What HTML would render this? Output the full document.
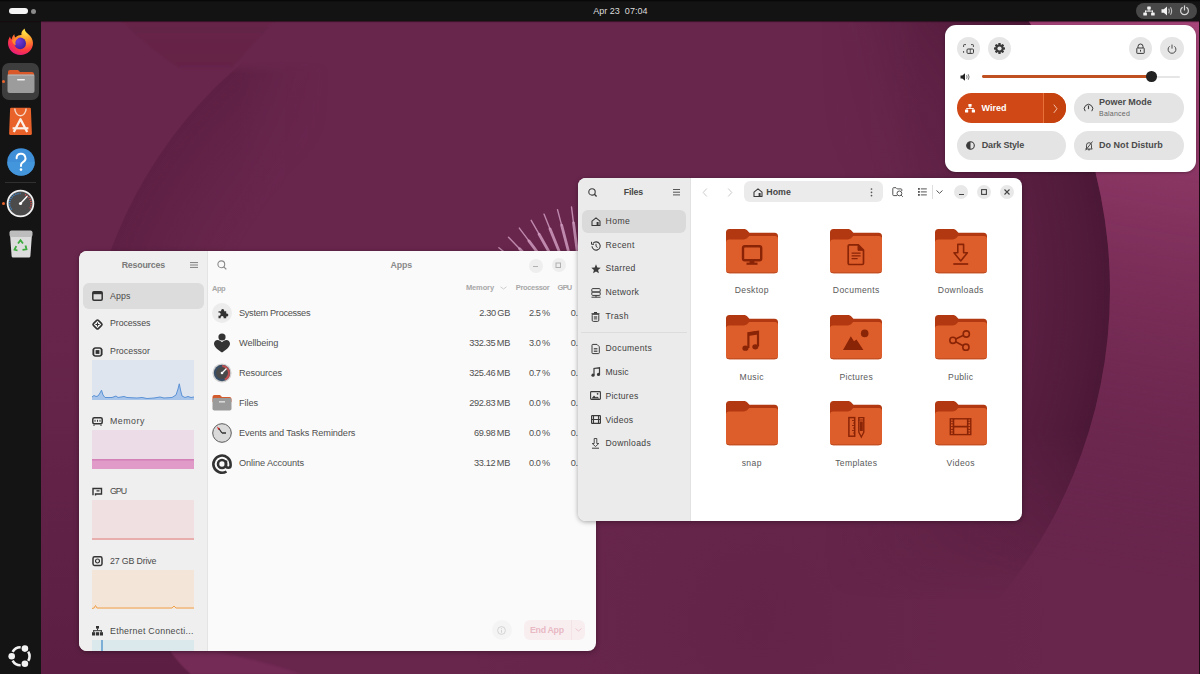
<!DOCTYPE html>
<html><head><meta charset="utf-8">
<style>
*{box-sizing:border-box;margin:0;padding:0}
html,body{width:1200px;height:674px;overflow:hidden;background:#69264d;font-family:"Liberation Sans",sans-serif;}
.abs,.a,.t{position:absolute}
.t{white-space:pre}
svg.a{overflow:visible}
#wall{position:absolute;left:0;top:0;width:1200px;height:674px}
#topbar{position:absolute;left:0;top:0;width:1200px;height:20.5px;background:linear-gradient(#050505 0,#0a0a0a 1px,#131313 2px);box-shadow:0 1px 1px rgba(20,5,12,.55);z-index:1}
#dock{position:absolute;left:0;top:20px;width:41px;height:654px;background:#141414}
.win{position:absolute;overflow:hidden;border-radius:8px;box-shadow:0 1px 5px rgba(0,0,0,.35)}
</style></head><body>
<svg id="wall" width="1200" height="674" viewBox="0 0 1200 674">
<defs>
<radialGradient id="gL" gradientUnits="userSpaceOnUse" cx="533" cy="406" r="450">
<stop offset="0.74" stop-color="#3a0c28" stop-opacity="0"/>
<stop offset="1" stop-color="#3a0c28" stop-opacity="0.22"/>
</radialGradient>
<radialGradient id="gR" gradientUnits="userSpaceOnUse" cx="625" cy="290" r="485">
<stop offset="0.5" stop-color="#2e0a20" stop-opacity="0"/>
<stop offset="0.8" stop-color="#2e0a20" stop-opacity="0.2"/>
<stop offset="0.96" stop-color="#2e0a20" stop-opacity="0.42"/>
<stop offset="1" stop-color="#2e0a20" stop-opacity="0.5"/>
</radialGradient>
<linearGradient id="gP" gradientUnits="userSpaceOnUse" x1="1150" y1="20" x2="1060" y2="560">
<stop offset="0" stop-color="#a8467a" stop-opacity="0.95"/>
<stop offset="0.45" stop-color="#84325e" stop-opacity="0.7"/>
<stop offset="1" stop-color="#69264d" stop-opacity="0"/>
</linearGradient>
<clipPath id="cL"><circle cx="533" cy="406" r="450"/></clipPath>
<clipPath id="cR"><circle cx="625" cy="290" r="485"/></clipPath>
<mask id="mOut"><rect width="1200" height="674" fill="#fff"/><circle cx="625" cy="290" r="485" fill="#000"/></mask>
<linearGradient id="mLg" gradientUnits="userSpaceOnUse" x1="240" y1="0" x2="330" y2="0"><stop offset="0" stop-color="#fff"/><stop offset="1" stop-color="#000"/></linearGradient>
<linearGradient id="mLv" gradientUnits="userSpaceOnUse" x1="0" y1="62" x2="0" y2="320"><stop offset="0" stop-color="#000"/><stop offset="0.045" stop-color="#fff"/><stop offset="0.8" stop-color="#fff"/><stop offset="1" stop-color="#000"/></linearGradient>
<linearGradient id="gBL" gradientUnits="userSpaceOnUse" x1="0" y1="260" x2="0" y2="674"><stop offset="0" stop-color="#3a0c28" stop-opacity="0"/><stop offset="1" stop-color="#3a0c28" stop-opacity="0.28"/></linearGradient>
<mask id="mL"><rect width="1200" height="674" fill="url(#mLv)"/></mask>
<mask id="mL2"><rect width="1200" height="674" fill="url(#mLg)"/></mask>
<filter id="blur2" x="-20%" y="-20%" width="140%" height="140%"><feGaussianBlur stdDeviation="1.2"/></filter>
<linearGradient id="gTop" gradientUnits="userSpaceOnUse" x1="0" y1="20" x2="0" y2="70"><stop offset="0" stop-color="#3a0c28" stop-opacity="0.05"/><stop offset="1" stop-color="#3a0c28" stop-opacity="0.10"/></linearGradient>
<linearGradient id="mRg1" gradientUnits="userSpaceOnUse" x1="0" y1="430" x2="0" y2="600"><stop offset="0" stop-color="#fff"/><stop offset="1" stop-color="#000"/></linearGradient>
<linearGradient id="mRg2" gradientUnits="userSpaceOnUse" x1="820" y1="0" x2="920" y2="0"><stop offset="0" stop-color="#000"/><stop offset="1" stop-color="#fff"/></linearGradient>
<mask id="mR1"><rect width="1200" height="674" fill="url(#mRg1)"/></mask>
<mask id="mR2"><rect width="1200" height="674" fill="url(#mRg2)"/></mask>
<radialGradient id="gBC" gradientUnits="userSpaceOnUse" cx="760" cy="620" r="330"><stop offset="0" stop-color="#2e0a20" stop-opacity="0.1"/><stop offset="1" stop-color="#2e0a20" stop-opacity="0"/></radialGradient>
</defs>
<rect width="1200" height="674" fill="#69264d"/>
<g mask="url(#mL2)"><circle cx="533" cy="406" r="450" fill="url(#gL)" mask="url(#mL)"/></g>
<path d="M120 20H276L231 68.5H180Q150 50 120 20z" fill="url(#gTop)" filter="url(#blur2)"/>
<g mask="url(#mR1)"><circle cx="625" cy="290" r="485" fill="url(#gR)" mask="url(#mR2)"/></g>
<rect x="430" y="290" width="660" height="384" fill="url(#gBC)"/>
<rect x="900" y="0" width="300" height="674" fill="url(#gP)" mask="url(#mOut)"/>
<path d="M41 250H150L160 600Q165 640 171 652Q180 665 191 674H41z" fill="url(#gBL)"/>
<path d="M171 652H216Q260 660 301 674H191Q180 665 171 652z" fill="#8a3566" opacity="0.35" filter="url(#blur2)"/>
<g stroke="#d5a2c6" stroke-opacity="0.8" stroke-linecap="round">
<line x1="585.7" y1="206.0" x2="585.7" y2="222.0" stroke-width="1.4"/><line x1="585.7" y1="222.0" x2="585.7" y2="262.0" stroke-width="2.8"/>
<line x1="571.5" y1="206.9" x2="573.5" y2="222.8" stroke-width="1.4"/><line x1="573.5" y1="222.8" x2="578.7" y2="262.5" stroke-width="2.8"/>
<line x1="557.5" y1="209.6" x2="561.6" y2="225.1" stroke-width="1.4"/><line x1="561.6" y1="225.1" x2="571.7" y2="263.8" stroke-width="2.8"/>
<line x1="544.0" y1="214.1" x2="550.0" y2="228.9" stroke-width="1.4"/><line x1="550.0" y1="228.9" x2="565.1" y2="266.0" stroke-width="2.8"/>
<line x1="531.2" y1="220.3" x2="539.1" y2="234.2" stroke-width="1.4"/><line x1="539.1" y1="234.2" x2="558.7" y2="269.1" stroke-width="2.8"/>
<line x1="519.3" y1="228.1" x2="528.9" y2="240.9" stroke-width="1.4"/><line x1="528.9" y1="240.9" x2="552.8" y2="272.9" stroke-width="2.8"/>
<line x1="508.5" y1="237.3" x2="519.6" y2="248.8" stroke-width="1.4"/><line x1="519.6" y1="248.8" x2="547.4" y2="277.5" stroke-width="2.8"/>
<line x1="498.9" y1="247.8" x2="511.4" y2="257.8" stroke-width="1.4"/><line x1="511.4" y1="257.8" x2="542.7" y2="282.7" stroke-width="2.8"/>
<line x1="490.8" y1="259.5" x2="504.4" y2="267.8" stroke-width="1.4"/><line x1="504.4" y1="267.8" x2="538.7" y2="288.5" stroke-width="2.8"/>
<line x1="484.2" y1="272.1" x2="498.8" y2="278.6" stroke-width="1.4"/><line x1="498.8" y1="278.6" x2="535.4" y2="294.8" stroke-width="2.8"/>
</g>
<rect x="1199" y="0" width="1" height="674" fill="#1a0a12"/>
</svg>
<div id="topbar">
<div class="abs" style="left:9px;top:8px;width:19px;height:6px;border-radius:3px;background:#f4f4f4"></div>
<div class="abs" style="left:31px;top:9px;width:5px;height:5px;border-radius:50%;background:#8a8a8a"></div>
<div class="abs" id="clock" style="left:593.2px;top:6.7px;color:#dcdcdc;font-size:9px;line-height:9px;white-space:pre;letter-spacing:0.02px">Apr 23  07:04</div>
<div class="abs" style="left:1136px;top:3px;width:61px;height:16px;border-radius:8px;background:#484848"></div>
<svg class="abs" style="left:1143px;top:6px" width="12" height="10" viewBox="0 0 12 10"><g fill="#f2f2f2"><rect x="4.2" y="0.5" width="3.6" height="3" rx="0.6"/><rect x="5.5" y="3" width="1" height="2.2"/><rect x="2" y="4.6" width="8" height="1"/><rect x="2" y="4.6" width="1" height="2"/><rect x="9" y="4.6" width="1" height="2"/><rect x="0.3" y="6.5" width="3.6" height="3" rx="0.6"/><rect x="8.1" y="6.5" width="3.6" height="3" rx="0.6"/></g></svg>
<svg class="abs" style="left:1161px;top:6px" width="12" height="10" viewBox="0 0 12 10"><path d="M0.5 3.3h2.3L6 0.5v9L2.8 6.7H0.5z" fill="#f2f2f2"/><path d="M7.6 2.6q1.4 2.4 0 4.8M9.5 1.2q2.3 3.8 0 7.6" stroke="#bdbdbd" stroke-width="1.1" fill="none"/></svg>
<svg class="abs" style="left:1179px;top:5px" width="11" height="11" viewBox="0 0 11 11"><path d="M3.3 2.6A3.9 3.9 0 1 0 7.7 2.6" stroke="#d8d8d8" stroke-width="1.2" fill="none" stroke-linecap="round"/><path d="M5.5 0.8v4.2" stroke="#d8d8d8" stroke-width="1.2" stroke-linecap="round"/></svg>
</div>
<div id="dock">
<!-- firefox -->
<svg class="abs" style="left:7px;top:8px" width="27" height="28" viewBox="0 0 27 28">
<defs><radialGradient id="ff1" cx="0.7" cy="0.1" r="1"><stop offset="0" stop-color="#ffe94a"/><stop offset="0.35" stop-color="#ff9d2b"/><stop offset="0.7" stop-color="#ff3d3d"/><stop offset="1" stop-color="#e31587"/></radialGradient>
<radialGradient id="ff2" cx="0.3" cy="0.3" r="0.8"><stop offset="0" stop-color="#7d3de0"/><stop offset="1" stop-color="#3a1f9e"/></radialGradient></defs>
<path d="M13.5 27C6.6 27 1 21.6 1 15.2c0-2.6 .8-4.9 2-6.6.2 1.3.8 2.3 1.6 2.9.3-2.3 1.4-4.2 2.8-5.3-.1 1.4.3 2.5 1 3.2C10.5 7.5 12.6 6.9 14.5 7 14 5 14.8 2.6 17.8.6c-.3 2.3 1.3 3.7 3.3 5.4C24.3 8.6 26 11.7 26 15.2 26 21.6 20.4 27 13.5 27z" fill="url(#ff1)"/>
<circle cx="13.2" cy="15.4" r="5.8" fill="url(#ff2)"/>
<path d="M5 12.8c1.5-2.4 4.5-3.8 7.6-3.4-2.6.9-4.2 3-4.2 5.5 0 .9.2 1.7.6 2.4C7 16.8 5.6 15 5 12.8z" fill="#ff8a2b"/>
</svg>
<!-- files highlight -->
<div class="abs" style="left:2px;top:43px;width:37px;height:37px;border-radius:7px;background:#3d3d3d"></div>
<div class="abs" style="left:2px;top:60px;width:3px;height:3px;border-radius:50%;background:#e8642c"></div>
<svg class="abs" style="left:7px;top:49px" width="28" height="25" viewBox="0 0 28 25">
<path d="M1 3a2 2 0 0 1 2-2h8l2 2h12a2 2 0 0 1 2 2v4H1z" fill="#d9582a"/>
<rect x="0.5" y="5.5" width="27" height="18.5" rx="2" fill="#9c9c9c"/>
<rect x="0.5" y="5.5" width="27" height="1.2" fill="#c7c7c7" opacity="0.6"/>
<rect x="10" y="10" width="8" height="1.6" rx="0.8" fill="#f0f0f0"/>
</svg>
<!-- app center -->
<svg class="abs" style="left:9px;top:87px" width="23" height="29" viewBox="0 0 23 29">
<path d="M2.2 1.8H20.8L21.8 26.8H1.2z" fill="#e9622a" stroke="#e9622a" stroke-width="2.2" stroke-linejoin="round"/>
<path d="M5.8 1.5A5.65 7.2 0 0 0 17.1 1.5" stroke="#f7d9c8" stroke-width="1.4" fill="none"/>
<path d="M4.8 25L11.5 12.2 18.2 25" stroke="#fbefe8" stroke-width="2.3" fill="none" stroke-linejoin="round"/>
<path d="M3.6 21.3H19.4" stroke="#fbefe8" stroke-width="2.2"/>
</svg>
<!-- help -->
<svg class="abs" style="left:7px;top:128px" width="28" height="28" viewBox="0 0 28 28">
<circle cx="14" cy="14" r="13.8" fill="#3e8ed8"/>
<path d="M0.2 14a13.8 13.8 0 0 0 27.6 0z" fill="#4a9be0" opacity="0.6"/>
<path d="M9.6 10.2a4.4 4.4 0 1 1 6.4 3.9c-1.2.7-2 1.5-2 2.9v1" stroke="#fff" stroke-width="2" fill="none" stroke-linecap="round"/>
<circle cx="14" cy="21.6" r="1.3" fill="#fff"/>
</svg>
<div class="abs" style="left:5px;top:162px;width:31px;height:1px;background:#303030"></div>
<!-- resources -->
<div class="abs" style="left:2px;top:182px;width:3px;height:3px;border-radius:50%;background:#e8642c"></div>
<svg class="abs" style="left:6px;top:169px" width="29" height="29" viewBox="0 0 29 29">
<circle cx="14.5" cy="14.5" r="13.8" fill="#f2f2f2"/>
<circle cx="14.5" cy="14.5" r="12" fill="#4b4b4b"/>
<path d="M5.6 20.5A10 10 0 0 1 14.5 4.5" stroke="#3d8ed8" stroke-width="1.6" stroke-dasharray="1 1.2" fill="none"/>
<path d="M19 5.6A10 10 0 0 1 23.4 20.5" stroke="#e05050" stroke-width="1.6" stroke-dasharray="1 1.2" fill="none"/>
<path d="M14.5 14.5L21 7.5" stroke="#fff" stroke-width="1.4" stroke-linecap="round"/>
<circle cx="14.5" cy="14.5" r="1.6" fill="#fff"/>
</svg>
<!-- trash -->
<svg class="abs" style="left:9px;top:210px" width="24" height="28" viewBox="0 0 24 28">
<path d="M1 4h22l-1.6 22a1.6 1.6 0 0 1-1.6 1.6H4.2A1.6 1.6 0 0 1 2.6 26z" fill="#dcdcdc"/>
<rect x="0.5" y="0.5" width="23" height="6.5" rx="2" fill="#bdbdbd"/>
<g fill="none" stroke="#3caa3c" stroke-width="1.8"><path d="M9 13.5l2.5-3.2 2.5 3.2"/><path d="M16.5 15.5l1 3.8-4 .5"/><path d="M8.5 20.5l-3-.8 1.8-3.6"/></g>
</svg>
<!-- ubuntu logo -->
<svg class="abs" style="left:8px;top:623.5px" width="25" height="25" viewBox="0 0 25 25"><path d="M4.63 7.84A9.0 9.0 0 0 1 12.66 3.20" stroke="#f2f2f2" stroke-width="2.6" fill="none"/><path d="M20.21 7.56A9.0 9.0 0 0 1 20.21 16.84" stroke="#f2f2f2" stroke-width="2.6" fill="none"/><path d="M12.66 21.20A9.0 9.0 0 0 1 4.63 16.56" stroke="#f2f2f2" stroke-width="2.6" fill="none"/><circle cx="3.70" cy="12.20" r="3.3" fill="#f2f2f2"/><circle cx="16.90" cy="4.58" r="3.3" fill="#f2f2f2"/><circle cx="16.90" cy="19.82" r="3.3" fill="#f2f2f2"/></svg>
</div>
<div id="res" class="win" style="left:79px;top:251px;width:517px;height:400px;background:#fafafa"><div class="a" style="left:0px;top:0px;width:128px;height:400px;background:#efefef;border-radius:0px;"></div>
<div class="a" style="left:128px;top:0px;width:1px;height:400px;background:#e4e4e4;border-radius:0px;"></div>
<div class="a" style="left:4px;top:32px;width:121px;height:26px;background:#dcdcdc;border-radius:6px;"></div>
<svg class="a" style="left:111px;top:11px" width="8" height="6" viewBox="0 0 8 6"><g fill="#8a8a8a"><rect y="0" width="8" height="1.1"/><rect y="2.45" width="8" height="1.1"/><rect y="4.9" width="8" height="1.1"/></g></svg>
<svg class="a" style="left:13px;top:40px" width="11" height="10" viewBox="0 0 11 10"><rect x="0.8" y="0.8" width="9.4" height="8.4" rx="1.2" fill="none" stroke="#333" stroke-width="1.5"/><rect x="0.8" y="0.8" width="9.4" height="2.4" fill="#333"/></svg>
<svg class="a" style="left:13px;top:68px" width="11" height="11" viewBox="0 0 11 11"><rect x="2" y="2" width="7" height="7" rx="1.2" transform="rotate(45 5.5 5.5)" fill="none" stroke="#333" stroke-width="1.6"/><path d="M3.5 5.5h4M5.5 3.5v4" stroke="#333" stroke-width="1"/></svg>
<svg class="a" style="left:13px;top:96px" width="11" height="10" viewBox="0 0 11 10"><rect x="1.5" y="1" width="8" height="8" rx="2" fill="none" stroke="#333" stroke-width="1.6"/><rect x="3.6" y="3.1" width="3.8" height="3.8" fill="#333"/><path d="M0 3h1.5M0 5h1.5M0 7h1.5M9.5 3H11M9.5 5H11M9.5 7H11" stroke="#333" stroke-width="0.8"/></svg>
<svg class="a" style="left:13px;top:166px" width="11" height="9" viewBox="0 0 11 9"><rect x="0.8" y="0.8" width="9.4" height="6" rx="1.5" fill="none" stroke="#333" stroke-width="1.5"/><path d="M3 2.8v2M5.5 2.8v2M8 2.8v2M2 7.5v1.5M9 7.5v1.5" stroke="#333" stroke-width="1"/></svg>
<svg class="a" style="left:13px;top:236px" width="11" height="9" viewBox="0 0 11 9"><path d="M1 0.8v7.4M1 1.5h8.5v5.5H3.5v1.5" fill="none" stroke="#333" stroke-width="1.4"/><path d="M4.5 3.8h3" stroke="#333" stroke-width="1.2"/></svg>
<svg class="a" style="left:13px;top:305px" width="11" height="10" viewBox="0 0 11 10"><rect x="1" y="0.8" width="9" height="8.6" rx="1.6" fill="none" stroke="#333" stroke-width="1.5"/><circle cx="5.5" cy="5" r="2" fill="none" stroke="#333" stroke-width="1.2"/></svg>
<svg class="a" style="left:13px;top:375px" width="11" height="10" viewBox="0 0 11 10"><g fill="#333"><rect x="4" y="0" width="3" height="2.6"/><rect x="5" y="2.4" width="1" height="2"/><rect x="1.2" y="4.2" width="8.6" height="1"/><rect x="1.2" y="4.2" width="1" height="2"/><rect x="8.8" y="4.2" width="1" height="2"/><rect x="0" y="6.2" width="3.2" height="3.3"/><rect x="7.8" y="6.2" width="3.2" height="3.3"/><rect x="4" y="6.2" width="3" height="3.3"/></g></svg>
<svg class="a" style="left:13px;top:109px" width="102" height="40" viewBox="0 0 102 40"><rect width="102" height="40" fill="#dfe5ee"/><path d="M0 37 L2 35.5 4 36.5 6 36 8 33 9.5 30.2 11 35 13 37.5 20 37.5 24 36 26 37.5 32 36.5 35 37.5 45 38 50 37.5 55 38.5 62 38 68 37 72 38 80 37.5 84 35 86 29 87.3 23.8 88.5 30 90 36 93 37.5 96 36.5 99 37.5 102 37 V40 H0Z" fill="#a9c5ea"/><path d="M0 37 L2 35.5 4 36.5 6 36 8 33 9.5 30.2 11 35 13 37.5 20 37.5 24 36 26 37.5 32 36.5 35 37.5 45 38 50 37.5 55 38.5 62 38 68 37 72 38 80 37.5 84 35 86 29 87.3 23.8 88.5 30 90 36 93 37.5 96 36.5 99 37.5 102 37" fill="none" stroke="#5b92d6" stroke-width="1"/></svg>
<svg class="a" style="left:13px;top:179px" width="102" height="39" viewBox="0 0 102 39"><rect width="102" height="39" fill="#ecdce7"/><rect y="29.5" width="102" height="9.5" fill="#e09bc9"/><path d="M0 29.8H102" stroke="#c96aa9" stroke-width="1"/></svg>
<svg class="a" style="left:13px;top:249px" width="102" height="40" viewBox="0 0 102 40"><rect width="102" height="40" fill="#f0e0e1"/><path d="M0 39H102" stroke="#e07a7a" stroke-width="1.2"/></svg>
<svg class="a" style="left:13px;top:319px" width="102" height="39" viewBox="0 0 102 39"><rect width="102" height="39" fill="#f3e6d9"/><path d="M0 38.5 L2 38 3.5 35.5 5 38 40 38 80 38 82 36 84 38 102 38" fill="none" stroke="#f0a04a" stroke-width="1"/></svg>
<svg class="a" style="left:13px;top:389px" width="102" height="12" viewBox="0 0 102 12"><rect width="102" height="12" fill="#dce9ec"/><path d="M10 0V12" stroke="#3a88c8" stroke-width="1.2"/></svg>
<svg class="a" style="left:138px;top:9px" width="10" height="10" viewBox="0 0 10 10"><circle cx="4.3" cy="4.3" r="3.4" fill="none" stroke="#8a8a8a" stroke-width="1.1"/><path d="M6.8 6.8L9.3 9.3" stroke="#8a8a8a" stroke-width="1.2"/></svg>
<div class="a" style="left:449.5px;top:7.5px;width:14px;height:14px;background:#eeeeee;border-radius:7px;"></div>
<div class="a" style="left:472.5px;top:7px;width:14px;height:14px;background:#eeeeee;border-radius:7px;"></div>
<div class="a" style="left:454px;top:15px;width:5px;height:1px;background:#b0b0b0;border-radius:0px;"></div>
<svg class="a" style="left:476px;top:10.5px" width="7" height="7" viewBox="0 0 7 7"><rect x="1" y="1" width="4.5" height="4.5" fill="none" stroke="#b0b0b0" stroke-width="1"/></svg>
<svg class="a" style="left:421px;top:35px" width="7" height="4" viewBox="0 0 7 4"><path d="M0.5 0.8L3.5 3 6.5 0.8" fill="none" stroke="#c8c8c8" stroke-width="0.9"/></svg>
<div class="a" style="left:133px;top:52px;width:20px;height:20px;background:#ececec;border-radius:10px;"></div>
<svg class="a" style="left:137.5px;top:56.5px" width="11" height="11" viewBox="0 0 11 11"><path d="M1.5 3.2H4.2A1.55 1.55 0 1 1 7.1 3.2H9.2V5.6A1.55 1.55 0 1 1 9.2 8.5V10.2H6.6A1.55 1.55 0 1 0 3.7 10.2H1.5V7.6A1.55 1.55 0 1 0 1.5 4.7z" fill="#333"/></svg>
<svg class="a" style="left:134px;top:82px" width="18" height="20" viewBox="0 0 18 20"><circle cx="9" cy="4" r="3.6" fill="#333"/><path d="M9 19.5C6 17.5 1 14.2 1 10.8 1 8.6 2.7 7 4.6 7 6.4 7 8 8 9 9.3 10 8 11.6 7 13.4 7 15.3 7 17 8.6 17 10.8 17 14.2 12 17.5 9 19.5z" fill="#333"/></svg>
<svg class="a" style="left:133px;top:112px" width="20" height="20" viewBox="0 0 20 20"><circle cx="10" cy="10" r="9.6" fill="#d0d0d0"/><circle cx="10" cy="10" r="8.2" fill="#3a4e66"/><path d="M10 2A8 8 0 0 1 18 10 8 8 0 0 1 13 17.5" fill="#c05050"/><circle cx="10" cy="10" r="6" fill="#4a4a4a"/><path d="M10 10L14.5 5.5" stroke="#fff" stroke-width="1.3"/><circle cx="10" cy="10" r="1.3" fill="#fff"/></svg>
<svg class="a" style="left:133px;top:143px" width="20" height="17" viewBox="0 0 20 17"><path d="M0.5 3a2 2 0 0 1 2-2h5.5l2 2h7.5a2 2 0 0 1 2 2v3H0.5z" fill="#d35c2e"/><rect x="0.5" y="4" width="19" height="12.5" rx="1.8" fill="#9a9a9a"/><rect x="7" y="7.2" width="6" height="1.3" fill="#e6e6e6"/></svg>
<svg class="a" style="left:133px;top:172px" width="20" height="20" viewBox="0 0 20 20"><circle cx="10" cy="10" r="9.3" fill="#dadada" stroke="#5a5a5a" stroke-width="1"/><path d="M10 10L6.5 5M10 10H14" stroke="#333" stroke-width="1.3"/><path d="M5 3.5l2.8 2.2-1.6 1.2z" fill="#d02020"/></svg>
<svg class="a" style="left:133px;top:203px" width="20" height="20" viewBox="0 0 20 20"><circle cx="10" cy="10" r="4" fill="none" stroke="#333" stroke-width="2.6"/><path d="M14 6.5V11.5a2.3 2.3 0 0 0 4.6 0V10A8.6 8.6 0 1 0 14.5 17.5" fill="none" stroke="#333" stroke-width="2.6"/></svg>
<div class="a" style="left:412.5px;top:369px;width:20px;height:20px;background:#f4f4f4;border-radius:10px;"></div>
<svg class="a" style="left:418px;top:374.5px" width="9" height="9" viewBox="0 0 9 9"><circle cx="4.5" cy="4.5" r="3.9" fill="none" stroke="#cfcfcf" stroke-width="0.9"/><path d="M4.5 3.8v3" stroke="#cfcfcf" stroke-width="0.9"/><circle cx="4.5" cy="2.4" r="0.5" fill="#cfcfcf"/></svg>
<div class="a" style="left:445px;top:368.5px;width:61px;height:20px;background:#f8eef0;border-radius:6px;"></div>
<div class="a" style="left:492px;top:368.5px;width:1px;height:20px;background:#f3e3e6;border-radius:0px;"></div>
<svg class="a" style="left:496px;top:377px" width="7" height="4" viewBox="0 0 7 4"><path d="M0.5 0.5L3.5 3 6.5 0.5" fill="none" stroke="#e9c4cc" stroke-width="0.9"/></svg>
<div class="t" style="left:42.70px;top:9.65px;font-size:8.8px;line-height:8.8px;color:#7a7a7a;font-weight:700;letter-spacing:-0.200px;">Resources</div>
<div class="t" style="left:31.00px;top:40.65px;font-size:8.8px;line-height:8.8px;color:#4a4a4a;font-weight:400;letter-spacing:0.112px;">Apps</div>
<div class="t" style="left:31.00px;top:68.35px;font-size:8.8px;line-height:8.8px;color:#4a4a4a;font-weight:400;letter-spacing:-0.085px;">Processes</div>
<div class="t" style="left:31.00px;top:96.15px;font-size:8.8px;line-height:8.8px;color:#4a4a4a;font-weight:400;letter-spacing:0.036px;">Processor</div>
<div class="t" style="left:31.00px;top:165.75px;font-size:8.8px;line-height:8.8px;color:#4a4a4a;font-weight:400;letter-spacing:0.504px;">Memory</div>
<div class="t" style="left:31.00px;top:235.55px;font-size:8.8px;line-height:8.8px;color:#4a4a4a;font-weight:400;letter-spacing:-1.039px;">GPU</div>
<div class="t" style="left:31.00px;top:305.75px;font-size:8.8px;line-height:8.8px;color:#4a4a4a;font-weight:400;letter-spacing:-0.152px;">27 GB Drive</div>
<div class="t" style="left:31.00px;top:375.85px;font-size:8.8px;line-height:8.8px;color:#4a4a4a;font-weight:400;letter-spacing:0.297px;">Ethernet Connecti...</div>
<div class="t" style="left:311.60px;top:9.95px;font-size:8.8px;line-height:8.8px;color:#8a8a8a;font-weight:700;letter-spacing:-0.167px;">Apps</div>
<div class="t" style="left:133.00px;top:33.65px;font-size:7.5px;line-height:7.5px;color:#a8a8a8;font-weight:700;letter-spacing:-0.447px;">App</div>
<div class="t" style="left:386.90px;top:33.05px;font-size:7.5px;line-height:7.5px;color:#a8a8a8;font-weight:700;letter-spacing:-0.113px;">Memory</div>
<div class="t" style="left:436.80px;top:33.05px;font-size:7.5px;line-height:7.5px;color:#a8a8a8;font-weight:700;letter-spacing:-0.348px;">Processor</div>
<div class="t" style="left:478.60px;top:33.05px;font-size:7.5px;line-height:7.5px;color:#a8a8a8;font-weight:700;letter-spacing:-0.783px;">GPU</div>
<div class="t" style="left:160.00px;top:58.01px;font-size:9.2px;line-height:9.2px;color:#505050;font-weight:400;letter-spacing:-0.305px;">System Processes</div>
<div class="t" style="left:400.28px;top:58.01px;font-size:9.2px;line-height:9.2px;color:#505050;font-weight:400;letter-spacing:-0.330px;">2.30 GB</div>
<div class="t" style="left:449.89px;top:58.01px;font-size:9.2px;line-height:9.2px;color:#505050;font-weight:400;letter-spacing:-0.342px;">2.5 %</div>
<div class="t" style="left:491.80px;top:58.01px;font-size:9.2px;line-height:9.2px;color:#505050;font-weight:400;letter-spacing:-0.460px;">0.</div>
<div class="t" style="left:160.00px;top:88.01px;font-size:9.2px;line-height:9.2px;color:#505050;font-weight:400;letter-spacing:-0.100px;">Wellbeing</div>
<div class="t" style="left:390.19px;top:88.01px;font-size:9.2px;line-height:9.2px;color:#505050;font-weight:400;letter-spacing:-0.328px;">332.35 MB</div>
<div class="t" style="left:449.89px;top:88.01px;font-size:9.2px;line-height:9.2px;color:#505050;font-weight:400;letter-spacing:-0.342px;">3.0 %</div>
<div class="t" style="left:491.80px;top:88.01px;font-size:9.2px;line-height:9.2px;color:#505050;font-weight:400;letter-spacing:-0.460px;">0.</div>
<div class="t" style="left:160.00px;top:118.01px;font-size:9.2px;line-height:9.2px;color:#505050;font-weight:400;letter-spacing:-0.110px;">Resources</div>
<div class="t" style="left:390.19px;top:118.01px;font-size:9.2px;line-height:9.2px;color:#505050;font-weight:400;letter-spacing:-0.328px;">325.46 MB</div>
<div class="t" style="left:449.89px;top:118.01px;font-size:9.2px;line-height:9.2px;color:#505050;font-weight:400;letter-spacing:-0.342px;">0.7 %</div>
<div class="t" style="left:491.80px;top:118.01px;font-size:9.2px;line-height:9.2px;color:#505050;font-weight:400;letter-spacing:-0.460px;">0.</div>
<div class="t" style="left:160.00px;top:148.01px;font-size:9.2px;line-height:9.2px;color:#505050;font-weight:400;letter-spacing:-0.097px;">Files</div>
<div class="t" style="left:390.19px;top:148.01px;font-size:9.2px;line-height:9.2px;color:#505050;font-weight:400;letter-spacing:-0.328px;">292.83 MB</div>
<div class="t" style="left:449.89px;top:148.01px;font-size:9.2px;line-height:9.2px;color:#505050;font-weight:400;letter-spacing:-0.342px;">0.0 %</div>
<div class="t" style="left:491.80px;top:148.01px;font-size:9.2px;line-height:9.2px;color:#505050;font-weight:400;letter-spacing:-0.460px;">0.</div>
<div class="t" style="left:160.00px;top:178.01px;font-size:9.2px;line-height:9.2px;color:#505050;font-weight:400;letter-spacing:-0.095px;">Events and Tasks Reminders</div>
<div class="t" style="left:394.99px;top:178.01px;font-size:9.2px;line-height:9.2px;color:#505050;font-weight:400;letter-spacing:-0.331px;">69.98 MB</div>
<div class="t" style="left:449.89px;top:178.01px;font-size:9.2px;line-height:9.2px;color:#505050;font-weight:400;letter-spacing:-0.342px;">0.0 %</div>
<div class="t" style="left:491.80px;top:178.01px;font-size:9.2px;line-height:9.2px;color:#505050;font-weight:400;letter-spacing:-0.460px;">0.</div>
<div class="t" style="left:160.00px;top:208.01px;font-size:9.2px;line-height:9.2px;color:#505050;font-weight:400;letter-spacing:-0.095px;">Online Accounts</div>
<div class="t" style="left:394.99px;top:208.01px;font-size:9.2px;line-height:9.2px;color:#505050;font-weight:400;letter-spacing:-0.331px;">33.12 MB</div>
<div class="t" style="left:449.89px;top:208.01px;font-size:9.2px;line-height:9.2px;color:#505050;font-weight:400;letter-spacing:-0.342px;">0.0 %</div>
<div class="t" style="left:491.80px;top:208.01px;font-size:9.2px;line-height:9.2px;color:#505050;font-weight:400;letter-spacing:-0.460px;">0.</div>
<div class="t" style="left:451.00px;top:374.55px;font-size:8.8px;line-height:8.8px;color:#e9b9c4;font-weight:700;letter-spacing:-0.299px;">End App</div></div>
<div id="files" class="win" style="left:578px;top:178px;width:444px;height:343px;background:#fff"><div class="a" style="left:0px;top:0px;width:112px;height:343px;background:#ebebeb;border-radius:0px;"></div>
<div class="a" style="left:112px;top:0px;width:1px;height:343px;background:#e2e2e2;border-radius:0px;"></div>
<svg class="a" style="left:9.5px;top:10px" width="10" height="9" viewBox="0 0 10 9"><circle cx="4" cy="3.9" r="3.2" fill="none" stroke="#3a3a3a" stroke-width="1.1"/><path d="M6.4 6.3L8.6 8.5" stroke="#3a3a3a" stroke-width="1.3"/></svg>
<svg class="a" style="left:94.5px;top:10.5px" width="7" height="7" viewBox="0 0 7 7"><g fill="#555"><rect y="0" width="7" height="1"/><rect y="2.7" width="7" height="1"/><rect y="5.4" width="7" height="1"/></g></svg>
<div class="a" style="left:4px;top:32px;width:104px;height:22.5px;background:#dadada;border-radius:6px;"></div>
<div class="a" style="left:3px;top:154px;width:106px;height:1px;background:#dcdcdc;border-radius:0px;"></div>
<svg class="a" style="left:12.5px;top:38.5px" width="10" height="9" viewBox="0 0 10 9"><path d="M1 4.2L5 0.8 9 4.2V8.5H1z" fill="none" stroke="#3a3a3a" stroke-width="1.1" stroke-linejoin="round"/><rect x="5.6" y="5" width="2" height="3.5" fill="#3a3a3a"/></svg>
<svg class="a" style="left:12.5px;top:62.5px" width="10" height="10" viewBox="0 0 10 10"><path d="M2 2.3A4.1 4.1 0 1 1 1 5.2" fill="none" stroke="#3a3a3a" stroke-width="1.1"/><path d="M0.5 0.8V3.3H3" fill="none" stroke="#3a3a3a" stroke-width="1"/><path d="M5 2.8V5.3L6.6 6.5" fill="none" stroke="#3a3a3a" stroke-width="1"/></svg>
<svg class="a" style="left:12.5px;top:86px" width="10" height="10" viewBox="0 0 10 10"><path d="M5 0.3L6.3 3.5 9.7 3.7 7.1 5.9 7.9 9.3 5 7.4 2.1 9.3 2.9 5.9 0.3 3.7 3.7 3.5z" fill="#3a3a3a"/></svg>
<svg class="a" style="left:12.5px;top:110px" width="10" height="10" viewBox="0 0 10 10"><rect x="0.8" y="0.6" width="8.4" height="3.4" rx="0.8" fill="none" stroke="#3a3a3a" stroke-width="1"/><rect x="0.8" y="4" width="8.4" height="3.4" rx="0.8" fill="none" stroke="#3a3a3a" stroke-width="1"/><path d="M0.5 9.2H9.5M5 7.4v1.8" stroke="#3a3a3a" stroke-width="1"/></svg>
<svg class="a" style="left:13px;top:133.5px" width="9" height="10" viewBox="0 0 9 10"><rect x="1.2" y="2.2" width="6.6" height="7.2" rx="1.2" fill="none" stroke="#3a3a3a" stroke-width="1"/><rect x="0.5" y="1.2" width="8" height="1.3" fill="#3a3a3a"/><rect x="3" y="0" width="3" height="1.4" fill="#3a3a3a"/><rect x="2.8" y="4" width="3.4" height="3.6" fill="#3a3a3a" opacity="0.6"/></svg>
<svg class="a" style="left:13px;top:165.5px" width="9" height="10" viewBox="0 0 9 10"><path d="M1 1.2a.8.8 0 0 1 .8-.8H6L8.3 2.7V8.8a.8.8 0 0 1-.8.8H1.8a.8.8 0 0 1-.8-.8z" fill="none" stroke="#3a3a3a" stroke-width="1"/><path d="M2.8 4.5h3.6M2.8 6h3.6M2.8 7.5h3.6" stroke="#3a3a3a" stroke-width="0.8"/></svg>
<svg class="a" style="left:12.5px;top:189px" width="10" height="10" viewBox="0 0 10 10"><path d="M3 8V1.5L8.5 0.8V7" fill="none" stroke="#3a3a3a" stroke-width="1.2"/><circle cx="2" cy="8.2" r="1.6" fill="#3a3a3a"/><circle cx="7.5" cy="7.4" r="1.6" fill="#3a3a3a"/></svg>
<svg class="a" style="left:12px;top:213px" width="11" height="9" viewBox="0 0 11 9"><rect x="0.6" y="0.6" width="9.8" height="7.8" rx="0.8" fill="none" stroke="#3a3a3a" stroke-width="1.1"/><path d="M1.5 7.5L4 4.5 6 6.5 7 5.5 9.5 7.5z" fill="#3a3a3a"/><circle cx="7.6" cy="2.8" r="0.9" fill="#3a3a3a"/></svg>
<svg class="a" style="left:12.5px;top:236.5px" width="10" height="9" viewBox="0 0 10 9"><rect x="0.6" y="0.6" width="8.8" height="7.8" rx="0.6" fill="none" stroke="#3a3a3a" stroke-width="1.2"/><path d="M0.6 4.5H9.4M2.5 0.6V8.4M7.5 0.6V8.4" stroke="#3a3a3a" stroke-width="1.1"/></svg>
<svg class="a" style="left:13px;top:260px" width="9" height="11" viewBox="0 0 9 11"><path d="M3.2 0.5h2.6v5h2L4.5 8.5 1.2 5.5h2z" fill="none" stroke="#3a3a3a" stroke-width="0.9"/><path d="M1 10.2H8" stroke="#3a3a3a" stroke-width="1"/></svg>
<svg class="a" style="left:124px;top:10px" width="6" height="9" viewBox="0 0 6 9"><path d="M4.8 0.5L1.2 4.5 4.8 8.5" fill="none" stroke="#c4c4c4" stroke-width="0.9"/></svg>
<svg class="a" style="left:148.5px;top:10px" width="6" height="9" viewBox="0 0 6 9"><path d="M1.2 0.5L4.8 4.5 1.2 8.5" fill="none" stroke="#c4c4c4" stroke-width="0.9"/></svg>
<div class="a" style="left:166px;top:3.3000000000000114px;width:138.5px;height:21px;background:#ebebeb;border-radius:6px;"></div>
<svg class="a" style="left:174.5px;top:9.5px" width="10" height="9" viewBox="0 0 10 9"><path d="M1 4.2L5 0.8 9 4.2V8.5H1z" fill="none" stroke="#3a3a3a" stroke-width="1.1" stroke-linejoin="round"/><rect x="5.6" y="5" width="2" height="3.5" fill="#3a3a3a"/></svg>
<svg class="a" style="left:292px;top:10px" width="3" height="9" viewBox="0 0 3 9"><g fill="#555"><circle cx="1.5" cy="1" r="0.85"/><circle cx="1.5" cy="4.3" r="0.85"/><circle cx="1.5" cy="7.6" r="0.85"/></g></svg>
<svg class="a" style="left:313.5px;top:9px" width="12" height="10" viewBox="0 0 12 10"><path d="M0.8 1.5a.8.8 0 0 1 .8-.8H4l1.2 1.2H9a.8.8 0 0 1 .8.8V4M5 8.6H1.6a.8.8 0 0 1-.8-.8V1.5" fill="none" stroke="#555" stroke-width="1"/><circle cx="7.4" cy="6.4" r="2.4" fill="none" stroke="#555" stroke-width="1"/><path d="M9.1 8.1L10.8 9.8" stroke="#555" stroke-width="1"/></svg>
<svg class="a" style="left:339.5px;top:10px" width="9" height="8" viewBox="0 0 9 8"><g fill="#555"><rect x="0" y="0" width="1.8" height="1.8"/><rect x="0" y="3" width="1.8" height="1.8"/><rect x="0" y="6" width="1.8" height="1.8"/><rect x="2.8" y="0.4" width="6" height="1"/><rect x="2.8" y="3.4" width="6" height="1"/><rect x="2.8" y="6.4" width="6" height="1"/></g></svg>
<div class="a" style="left:354px;top:7px;width:1px;height:13.5px;background:#dedede;border-radius:0px;"></div>
<svg class="a" style="left:358px;top:12px" width="7" height="4" viewBox="0 0 7 4"><path d="M0.5 0.5L3.5 3.3 6.5 0.5" fill="none" stroke="#555" stroke-width="1"/></svg>
<div class="a" style="left:375.79999999999995px;top:6.800000000000011px;width:14.4px;height:14.4px;background:#e8e8e8;border-radius:7.2px;"></div>
<div class="a" style="left:398.79999999999995px;top:6.800000000000011px;width:14.4px;height:14.4px;background:#e8e8e8;border-radius:7.2px;"></div>
<div class="a" style="left:421.79999999999995px;top:6.800000000000011px;width:14.4px;height:14.4px;background:#e8e8e8;border-radius:7.2px;"></div>
<div class="a" style="left:380.5px;top:15.5px;width:5px;height:1.2px;background:#444;border-radius:0px;"></div>
<svg class="a" style="left:403px;top:11px" width="6" height="6" viewBox="0 0 6 6"><rect x="0.6" y="0.6" width="4.8" height="4.8" fill="none" stroke="#444" stroke-width="1.1"/></svg>
<svg class="a" style="left:426px;top:11px" width="6" height="6" viewBox="0 0 6 6"><path d="M0.5 0.5L5.5 5.5M5.5 0.5L0.5 5.5" stroke="#444" stroke-width="1.1"/></svg>
<svg class="a" style="left:147.6px;top:51.3px" width="52" height="45" viewBox="0 0 52 45"><path d="M0 3.5A3.5 3.5 0 0 1 3.5 0H17.5C19.5 0 20.5 .6 21.8 2L23.4 3.7H48.5A3.5 3.5 0 0 1 52 7.2V16H0z" fill="#b13810"/>
<path d="M0 13.6A3.2 3.2 0 0 1 3.2 10.4H17.5C19.6 10.4 20.8 9.6 22 8.3L23.2 7.1H48.8A3.2 3.2 0 0 1 52 10.3V40.7A3.5 3.5 0 0 1 48.5 44.2H3.5A3.5 3.5 0 0 1 0 40.7z" fill="#de5e2b"/>
<path d="M0 40A3.5 3.5 0 0 0 3.5 43.5H48.5A3.5 3.5 0 0 0 52 40V40.7A3.5 3.5 0 0 1 48.5 44.2H3.5A3.5 3.5 0 0 1 0 40.7z" fill="#b0421a"/>
<rect x="17" y="17.2" width="18.2" height="14" rx="1.8" fill="none" stroke="#8a2406" stroke-width="2.4"/><path d="M17 18.5v12" stroke="#8a2406" stroke-width="1.2"/><rect x="23.6" y="31" width="4.8" height="3.2" fill="#8a2406"/><rect x="20.5" y="33.6" width="11" height="2.2" fill="#8a2406"/></svg>
<svg class="a" style="left:252.1px;top:51.3px" width="52" height="45" viewBox="0 0 52 45"><path d="M0 3.5A3.5 3.5 0 0 1 3.5 0H17.5C19.5 0 20.5 .6 21.8 2L23.4 3.7H48.5A3.5 3.5 0 0 1 52 7.2V16H0z" fill="#b13810"/>
<path d="M0 13.6A3.2 3.2 0 0 1 3.2 10.4H17.5C19.6 10.4 20.8 9.6 22 8.3L23.2 7.1H48.8A3.2 3.2 0 0 1 52 10.3V40.7A3.5 3.5 0 0 1 48.5 44.2H3.5A3.5 3.5 0 0 1 0 40.7z" fill="#de5e2b"/>
<path d="M0 40A3.5 3.5 0 0 0 3.5 43.5H48.5A3.5 3.5 0 0 0 52 40V40.7A3.5 3.5 0 0 1 48.5 44.2H3.5A3.5 3.5 0 0 1 0 40.7z" fill="#b0421a"/>
<path d="M19.5 15.8h8.8l5.2 5.2v13.2a1.3 1.3 0 0 1-1.3 1.3H19.5a1.3 1.3 0 0 1-1.3-1.3V17.1a1.3 1.3 0 0 1 1.3-1.3z" fill="none" stroke="#8a2406" stroke-width="1.7"/><path d="M28 16v5.3h5.3" fill="#8a2406" stroke="#8a2406" stroke-width="1"/><path d="M21.6 24.2h9M21.6 26.8h9M21.6 29.6h6" stroke="#8a2406" stroke-width="1.3"/></svg>
<svg class="a" style="left:356.6px;top:51.3px" width="52" height="45" viewBox="0 0 52 45"><path d="M0 3.5A3.5 3.5 0 0 1 3.5 0H17.5C19.5 0 20.5 .6 21.8 2L23.4 3.7H48.5A3.5 3.5 0 0 1 52 7.2V16H0z" fill="#b13810"/>
<path d="M0 13.6A3.2 3.2 0 0 1 3.2 10.4H17.5C19.6 10.4 20.8 9.6 22 8.3L23.2 7.1H48.8A3.2 3.2 0 0 1 52 10.3V40.7A3.5 3.5 0 0 1 48.5 44.2H3.5A3.5 3.5 0 0 1 0 40.7z" fill="#de5e2b"/>
<path d="M0 40A3.5 3.5 0 0 0 3.5 43.5H48.5A3.5 3.5 0 0 0 52 40V40.7A3.5 3.5 0 0 1 48.5 44.2H3.5A3.5 3.5 0 0 1 0 40.7z" fill="#b0421a"/>
<path d="M22.8 15.4h5.8v8.4h3.8L25.7 32 19 23.8h3.8z" fill="none" stroke="#8a2406" stroke-width="1.6" stroke-linejoin="round"/><path d="M18.3 35H33.2" stroke="#8a2406" stroke-width="1.7"/></svg>
<svg class="a" style="left:147.6px;top:137.3px" width="52" height="45" viewBox="0 0 52 45"><path d="M0 3.5A3.5 3.5 0 0 1 3.5 0H17.5C19.5 0 20.5 .6 21.8 2L23.4 3.7H48.5A3.5 3.5 0 0 1 52 7.2V16H0z" fill="#b13810"/>
<path d="M0 13.6A3.2 3.2 0 0 1 3.2 10.4H17.5C19.6 10.4 20.8 9.6 22 8.3L23.2 7.1H48.8A3.2 3.2 0 0 1 52 10.3V40.7A3.5 3.5 0 0 1 48.5 44.2H3.5A3.5 3.5 0 0 1 0 40.7z" fill="#de5e2b"/>
<path d="M0 40A3.5 3.5 0 0 0 3.5 43.5H48.5A3.5 3.5 0 0 0 52 40V40.7A3.5 3.5 0 0 1 48.5 44.2H3.5A3.5 3.5 0 0 1 0 40.7z" fill="#b0421a"/>
<path d="M22.4 33V18.3L32 16.8V31.5" fill="none" stroke="#8a2406" stroke-width="2.2"/><path d="M22.4 17.6L32 16.1V19.4L22.4 20.9z" fill="#8a2406"/><ellipse cx="19.4" cy="33.2" rx="3" ry="2.6" fill="#8a2406"/><ellipse cx="29.3" cy="31.8" rx="3" ry="2.6" fill="#8a2406"/></svg>
<svg class="a" style="left:252.1px;top:137.3px" width="52" height="45" viewBox="0 0 52 45"><path d="M0 3.5A3.5 3.5 0 0 1 3.5 0H17.5C19.5 0 20.5 .6 21.8 2L23.4 3.7H48.5A3.5 3.5 0 0 1 52 7.2V16H0z" fill="#b13810"/>
<path d="M0 13.6A3.2 3.2 0 0 1 3.2 10.4H17.5C19.6 10.4 20.8 9.6 22 8.3L23.2 7.1H48.8A3.2 3.2 0 0 1 52 10.3V40.7A3.5 3.5 0 0 1 48.5 44.2H3.5A3.5 3.5 0 0 1 0 40.7z" fill="#de5e2b"/>
<path d="M0 40A3.5 3.5 0 0 0 3.5 43.5H48.5A3.5 3.5 0 0 0 52 40V40.7A3.5 3.5 0 0 1 48.5 44.2H3.5A3.5 3.5 0 0 1 0 40.7z" fill="#b0421a"/>
<path d="M13 35.1L20.8 21.2 24 26.3 26.5 24.6 33.4 35.1z" fill="#8a2406"/><circle cx="34.7" cy="18.4" r="3.8" fill="#8a2406"/></svg>
<svg class="a" style="left:356.6px;top:137.3px" width="52" height="45" viewBox="0 0 52 45"><path d="M0 3.5A3.5 3.5 0 0 1 3.5 0H17.5C19.5 0 20.5 .6 21.8 2L23.4 3.7H48.5A3.5 3.5 0 0 1 52 7.2V16H0z" fill="#b13810"/>
<path d="M0 13.6A3.2 3.2 0 0 1 3.2 10.4H17.5C19.6 10.4 20.8 9.6 22 8.3L23.2 7.1H48.8A3.2 3.2 0 0 1 52 10.3V40.7A3.5 3.5 0 0 1 48.5 44.2H3.5A3.5 3.5 0 0 1 0 40.7z" fill="#de5e2b"/>
<path d="M0 40A3.5 3.5 0 0 0 3.5 43.5H48.5A3.5 3.5 0 0 0 52 40V40.7A3.5 3.5 0 0 1 48.5 44.2H3.5A3.5 3.5 0 0 1 0 40.7z" fill="#b0421a"/>
<circle cx="17.9" cy="25.3" r="3.1" fill="none" stroke="#8a2406" stroke-width="1.6"/><circle cx="31.3" cy="19" r="3.1" fill="none" stroke="#8a2406" stroke-width="1.6"/><circle cx="30.9" cy="32.2" r="3.1" fill="none" stroke="#8a2406" stroke-width="1.6"/><path d="M20.7 23.9L28.5 20.3M20.7 26.8L28.1 30.7" stroke="#8a2406" stroke-width="1.6"/></svg>
<svg class="a" style="left:147.6px;top:223.3px" width="52" height="45" viewBox="0 0 52 45"><path d="M0 3.5A3.5 3.5 0 0 1 3.5 0H17.5C19.5 0 20.5 .6 21.8 2L23.4 3.7H48.5A3.5 3.5 0 0 1 52 7.2V16H0z" fill="#b13810"/>
<path d="M0 13.6A3.2 3.2 0 0 1 3.2 10.4H17.5C19.6 10.4 20.8 9.6 22 8.3L23.2 7.1H48.8A3.2 3.2 0 0 1 52 10.3V40.7A3.5 3.5 0 0 1 48.5 44.2H3.5A3.5 3.5 0 0 1 0 40.7z" fill="#de5e2b"/>
<path d="M0 40A3.5 3.5 0 0 0 3.5 43.5H48.5A3.5 3.5 0 0 0 52 40V40.7A3.5 3.5 0 0 1 48.5 44.2H3.5A3.5 3.5 0 0 1 0 40.7z" fill="#b0421a"/>
</svg>
<svg class="a" style="left:252.1px;top:223.3px" width="52" height="45" viewBox="0 0 52 45"><path d="M0 3.5A3.5 3.5 0 0 1 3.5 0H17.5C19.5 0 20.5 .6 21.8 2L23.4 3.7H48.5A3.5 3.5 0 0 1 52 7.2V16H0z" fill="#b13810"/>
<path d="M0 13.6A3.2 3.2 0 0 1 3.2 10.4H17.5C19.6 10.4 20.8 9.6 22 8.3L23.2 7.1H48.8A3.2 3.2 0 0 1 52 10.3V40.7A3.5 3.5 0 0 1 48.5 44.2H3.5A3.5 3.5 0 0 1 0 40.7z" fill="#de5e2b"/>
<path d="M0 40A3.5 3.5 0 0 0 3.5 43.5H48.5A3.5 3.5 0 0 0 52 40V40.7A3.5 3.5 0 0 1 48.5 44.2H3.5A3.5 3.5 0 0 1 0 40.7z" fill="#b0421a"/>
<rect x="18.9" y="16.6" width="5.8" height="18.6" fill="none" stroke="#8a2406" stroke-width="1.5"/><path d="M22 19.5h2.7M23 22h1.7M22 24.5h2.7M23 27h1.7M22 29.5h2.7M23 32h1.7" stroke="#8a2406" stroke-width="0.9"/><path d="M28.8 16.6h5v14.6l-2.5 4.8-2.5-4.8z" fill="none" stroke="#8a2406" stroke-width="1.4"/><rect x="29.8" y="20.5" width="3" height="9.5" fill="#8a2406"/><path d="M28.8 19h5" stroke="#8a2406" stroke-width="1"/></svg>
<svg class="a" style="left:356.6px;top:223.3px" width="52" height="45" viewBox="0 0 52 45"><path d="M0 3.5A3.5 3.5 0 0 1 3.5 0H17.5C19.5 0 20.5 .6 21.8 2L23.4 3.7H48.5A3.5 3.5 0 0 1 52 7.2V16H0z" fill="#b13810"/>
<path d="M0 13.6A3.2 3.2 0 0 1 3.2 10.4H17.5C19.6 10.4 20.8 9.6 22 8.3L23.2 7.1H48.8A3.2 3.2 0 0 1 52 10.3V40.7A3.5 3.5 0 0 1 48.5 44.2H3.5A3.5 3.5 0 0 1 0 40.7z" fill="#de5e2b"/>
<path d="M0 40A3.5 3.5 0 0 0 3.5 43.5H48.5A3.5 3.5 0 0 0 52 40V40.7A3.5 3.5 0 0 1 48.5 44.2H3.5A3.5 3.5 0 0 1 0 40.7z" fill="#b0421a"/>
<rect x="15.3" y="17.8" width="20.5" height="15.8" fill="none" stroke="#8a2406" stroke-width="1.4"/><path d="M18.5 17.8V33.6M32.7 17.8V33.6M18.5 25.6H32.7" stroke="#8a2406" stroke-width="1.6"/><path d="M15.3 20.2h3.2M15.3 22.8h3.2M15.3 25.6h3.2M15.3 28.4h3.2M15.3 31h3.2M32.7 20.2h3.1M32.7 22.8h3.1M32.7 25.6h3.1M32.7 28.4h3.1M32.7 31h3.1" stroke="#8a2406" stroke-width="1"/></svg>
<div class="t" style="left:45.70px;top:9.55px;font-size:8.8px;line-height:8.8px;color:#474747;font-weight:700;letter-spacing:-0.137px;">Files</div>
<div class="t" style="left:27.50px;top:39.02px;font-size:8.6px;line-height:8.6px;color:#404040;font-weight:400;letter-spacing:0.454px;">Home</div>
<div class="t" style="left:27.50px;top:62.72px;font-size:8.6px;line-height:8.6px;color:#404040;font-weight:400;letter-spacing:0.327px;">Recent</div>
<div class="t" style="left:27.50px;top:86.42px;font-size:8.6px;line-height:8.6px;color:#404040;font-weight:400;letter-spacing:0.282px;">Starred</div>
<div class="t" style="left:27.50px;top:110.22px;font-size:8.6px;line-height:8.6px;color:#404040;font-weight:400;letter-spacing:0.315px;">Network</div>
<div class="t" style="left:27.50px;top:134.12px;font-size:8.6px;line-height:8.6px;color:#404040;font-weight:400;letter-spacing:0.325px;">Trash</div>
<div class="t" style="left:27.50px;top:166.42px;font-size:8.6px;line-height:8.6px;color:#404040;font-weight:400;letter-spacing:0.366px;">Documents</div>
<div class="t" style="left:27.50px;top:190.12px;font-size:8.6px;line-height:8.6px;color:#404040;font-weight:400;letter-spacing:0.137px;">Music</div>
<div class="t" style="left:27.50px;top:214.12px;font-size:8.6px;line-height:8.6px;color:#404040;font-weight:400;letter-spacing:0.236px;">Pictures</div>
<div class="t" style="left:27.50px;top:237.72px;font-size:8.6px;line-height:8.6px;color:#404040;font-weight:400;letter-spacing:0.295px;">Videos</div>
<div class="t" style="left:27.50px;top:261.22px;font-size:8.6px;line-height:8.6px;color:#404040;font-weight:400;letter-spacing:0.336px;">Downloads</div>
<div class="t" style="left:188.30px;top:9.75px;font-size:8.8px;line-height:8.8px;color:#474747;font-weight:700;letter-spacing:0.016px;">Home</div>
<div class="t" style="left:156.73px;top:108.02px;font-size:8.6px;line-height:8.6px;color:#5a5a5a;font-weight:400;letter-spacing:0.368px;">Desktop</div>
<div class="t" style="left:254.84px;top:108.02px;font-size:8.6px;line-height:8.6px;color:#5a5a5a;font-weight:400;letter-spacing:0.380px;">Documents</div>
<div class="t" style="left:359.85px;top:108.02px;font-size:8.6px;line-height:8.6px;color:#5a5a5a;font-weight:400;letter-spacing:0.372px;">Downloads</div>
<div class="t" style="left:161.59px;top:194.72px;font-size:8.6px;line-height:8.6px;color:#5a5a5a;font-weight:400;letter-spacing:0.393px;">Music</div>
<div class="t" style="left:261.49px;top:194.72px;font-size:8.6px;line-height:8.6px;color:#5a5a5a;font-weight:400;letter-spacing:0.310px;">Pictures</div>
<div class="t" style="left:370.08px;top:194.72px;font-size:8.6px;line-height:8.6px;color:#5a5a5a;font-weight:400;letter-spacing:0.328px;">Public</div>
<div class="t" style="left:163.63px;top:280.72px;font-size:8.6px;line-height:8.6px;color:#5a5a5a;font-weight:400;letter-spacing:0.435px;">snap</div>
<div class="t" style="left:257.14px;top:280.72px;font-size:8.6px;line-height:8.6px;color:#5a5a5a;font-weight:400;letter-spacing:0.343px;">Templates</div>
<div class="t" style="left:368.62px;top:280.72px;font-size:8.6px;line-height:8.6px;color:#5a5a5a;font-weight:400;letter-spacing:0.366px;">Videos</div></div>
<div id="qs" class="win" style="left:944.5px;top:24.5px;width:251px;height:147.5px;background:#fff;border-radius:11px;box-shadow:0 1px 3px rgba(0,0,0,.3)"><div class="a" style="left:12.0px;top:12.299999999999997px;width:23.4px;height:23.4px;background:#e6e6e6;border-radius:11.7px;"></div>
<div class="a" style="left:43.19999999999993px;top:12.299999999999997px;width:23.4px;height:23.4px;background:#e6e6e6;border-radius:11.7px;"></div>
<div class="a" style="left:184.5px;top:12.299999999999997px;width:23.4px;height:23.4px;background:#e6e6e6;border-radius:11.7px;"></div>
<div class="a" style="left:215.70000000000005px;top:12.299999999999997px;width:23.4px;height:23.4px;background:#e6e6e6;border-radius:11.7px;"></div>
<svg class="a" style="left:18.5px;top:19.0px" width="11" height="10" viewBox="0 0 11 10"><path d="M0.6 3V1.2a.6.6 0 0 1 .6-.6H3M8 0.6h1.8a.6.6 0 0 1 .6.6V3M0.6 7v1.8" fill="none" stroke="#3a3a3a" stroke-width="0.9"/><rect x="4" y="5" width="6.5" height="4.4" rx="1" fill="none" stroke="#3a3a3a" stroke-width="1"/><path d="M7.25 5v4.4" stroke="#3a3a3a" stroke-width="0.8"/></svg>
<svg class="a" style="left:49.5px;top:18.5px" width="11" height="11" viewBox="0 0 11 11"><rect x="4.3" y="0" width="2.4" height="11" rx="0.6" transform="rotate(0 5.5 5.5)" fill="#3a3a3a"/><rect x="4.3" y="0" width="2.4" height="11" rx="0.6" transform="rotate(45 5.5 5.5)" fill="#3a3a3a"/><rect x="4.3" y="0" width="2.4" height="11" rx="0.6" transform="rotate(90 5.5 5.5)" fill="#3a3a3a"/><rect x="4.3" y="0" width="2.4" height="11" rx="0.6" transform="rotate(135 5.5 5.5)" fill="#3a3a3a"/><circle cx="5.5" cy="5.5" r="4" fill="#3a3a3a"/><circle cx="5.5" cy="5.5" r="2.1" fill="#e6e6e6"/></svg>
<svg class="a" style="left:191.70000000000005px;top:18.0px" width="9" height="11" viewBox="0 0 9 11"><path d="M2 5V3.5a2.5 2.5 0 0 1 5 0V5" fill="none" stroke="#3a3a3a" stroke-width="1"/><rect x="0.8" y="5" width="7.4" height="5.4" rx="0.5" fill="none" stroke="#3a3a3a" stroke-width="1"/><rect x="4" y="6.8" width="1" height="1.8" fill="#3a3a3a"/></svg>
<svg class="a" style="left:222.5px;top:19.0px" width="10" height="10" viewBox="0 0 10 10"><path d="M2.6 2.3A3.9 3.9 0 1 0 7.4 2.3" fill="none" stroke="#3a3a3a" stroke-width="0.9"/><path d="M5 0.6v4" stroke="#3a3a3a" stroke-width="0.9"/></svg>
<svg class="a" style="left:15.5px;top:48.0px" width="11" height="8" viewBox="0 0 11 8"><path d="M0.5 2.5h1.8L5 0.3v7.4L2.3 5.5H0.5z" fill="#222"/><path d="M6.6 2.2q1 1.8 0 3.6M8.2 1.2q1.8 2.8 0 5.6" fill="none" stroke="#555" stroke-width="0.8"/></svg>
<div class="a" style="left:37.0px;top:51.0px;width:198.5px;height:2.4px;background:#e6e6e6;border-radius:1.2px;"></div>
<div class="a" style="left:37.0px;top:50.8px;width:170px;height:2.8px;background:#c0501f;border-radius:1.4px;"></div>
<div class="a" style="left:201.70000000000005px;top:46.8px;width:10.6px;height:10.6px;background:#222;border-radius:5.3px;"></div>
<div class="a" style="left:12.0px;top:68.8px;width:109.3px;height:29.4px;background:#d04816;border-radius:14.7px;"></div>
<div class="a" style="left:99.0px;top:68.8px;width:22.3px;height:29.4px;background:#c5420f;border-radius:0 14.7px 14.7px 0px;"></div>
<div class="a" style="left:98.5px;top:68.8px;width:0.8px;height:29.4px;background:#e8703a;border-radius:0px;"></div>
<svg class="a" style="left:20.799999999999955px;top:79.3px" width="10" height="8.5" viewBox="0 0 10 8.5"><g fill="#fff"><rect x="3.4" y="0" width="3.2" height="2.8" rx="0.5"/><rect x="4.5" y="2.5" width="1" height="1.8"/><rect x="1.5" y="4" width="7" height="0.9"/><rect x="1.5" y="4" width="0.9" height="1.5"/><rect x="7.6" y="4" width="0.9" height="1.5"/><rect x="0" y="5.4" width="3.2" height="3" rx="0.5"/><rect x="6.8" y="5.4" width="3.2" height="3" rx="0.5"/></g></svg>
<svg class="a" style="left:108.29999999999995px;top:79.3px" width="5" height="9.5" viewBox="0 0 5 9.5"><path d="M0.8 0.6L4 4.75 0.8 8.9" fill="none" stroke="#f6c9b4" stroke-width="0.9"/></svg>
<div class="a" style="left:129.5px;top:68.8px;width:109.8px;height:29.4px;background:#e4e4e4;border-radius:14.7px;"></div>
<svg class="a" style="left:138.0px;top:78.0px" width="11" height="9" viewBox="0 0 11 9"><path d="M2.2 8.2A4.2 4.2 0 1 1 8.8 8.2" fill="none" stroke="#3a3a3a" stroke-width="1"/><path d="M5.5 2.6V5.2" stroke="#3a3a3a" stroke-width="1.1"/><circle cx="5.5" cy="5.6" r="0.7" fill="#3a3a3a"/></svg>
<div class="a" style="left:12.0px;top:106.5px;width:109.3px;height:29px;background:#e4e4e4;border-radius:14.5px;"></div>
<svg class="a" style="left:21.5px;top:116.69999999999999px" width="9" height="9" viewBox="0 0 9 9"><circle cx="4.5" cy="4.5" r="3.8" fill="none" stroke="#3a3a3a" stroke-width="1.1"/><path d="M4.5 0.7A3.8 3.8 0 0 0 4.5 8.3z" fill="#3a3a3a"/></svg>
<div class="a" style="left:129.5px;top:106.5px;width:109.8px;height:29px;background:#e4e4e4;border-radius:14.5px;"></div>
<svg class="a" style="left:140.0px;top:116.30000000000001px" width="8" height="10" viewBox="0 0 8 10"><path d="M1.5 7.2V4.2a2.5 2.5 0 0 1 5 0v3l.8.8H.7z" fill="none" stroke="#3a3a3a" stroke-width="0.9"/><path d="M3 8.8h2" stroke="#3a3a3a" stroke-width="0.9"/><path d="M0.5 9.3L7.5 0.5" stroke="#3a3a3a" stroke-width="0.9"/></svg>
<div class="t" style="left:37.00px;top:79.08px;font-size:9px;line-height:9px;color:#ffffff;font-weight:700;letter-spacing:-0.005px;">Wired</div>
<div class="t" style="left:154.60px;top:73.88px;font-size:9px;line-height:9px;color:#4a4a4a;font-weight:700;letter-spacing:-0.046px;">Power Mode</div>
<div class="t" style="left:154.50px;top:85.67px;font-size:7px;line-height:7px;color:#666;font-weight:400;letter-spacing:0.228px;">Balanced</div>
<div class="t" style="left:37.30px;top:116.48px;font-size:9px;line-height:9px;color:#4a4a4a;font-weight:700;letter-spacing:-0.181px;">Dark Style</div>
<div class="t" style="left:154.60px;top:116.48px;font-size:9px;line-height:9px;color:#4a4a4a;font-weight:700;letter-spacing:0.008px;">Do Not Disturb</div></div>
</body></html>
